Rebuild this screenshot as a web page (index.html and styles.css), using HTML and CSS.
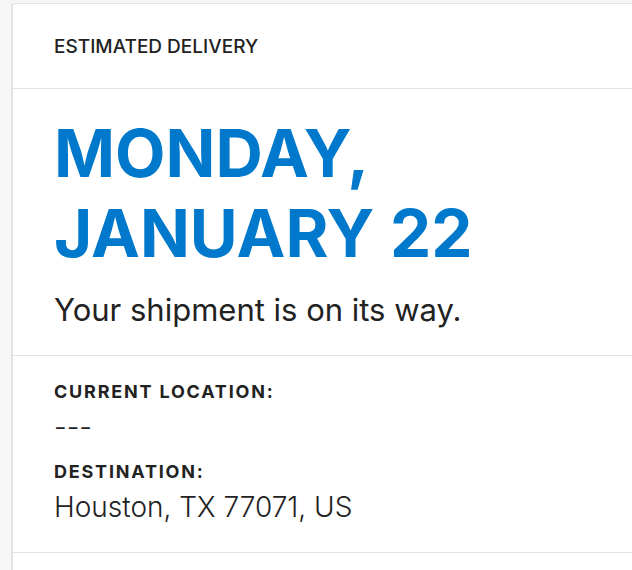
FILE: index.html
```html
<!DOCTYPE html>
<html lang="en">
<head>
<meta charset="utf-8">
<link rel="stylesheet" href="styles.css">
</head>
<body>
<div class="card">
  <div class="card-header">ESTIMATED DELIVERY</div>
  <div class="section hero">
    <h1 class="date">MONDAY,<br>JANUARY 22</h1>
    <p class="status">Your shipment is on its way.</p>
  </div>
  <div class="section details">
    <div class="label">CURRENT LOCATION:</div>
    <div class="value dash">---</div>
    <div class="label">DESTINATION:</div>
    <div class="value">Houston, TX 77071, US</div>
  </div>
  <div class="section footer"></div>
</div>
</body>
</html>
```

FILE: styles.css
```css
html, body {
  margin: 0;
  padding: 0;
  height: 100%;
  overflow: hidden;
}
body {
  background: #f6f6f7;
  font-family: Inter, "Noto Sans", sans-serif;
  color: #222;
  padding: 3px 0 0 11px;
  box-sizing: border-box;
}
.card {
  width: 720px;
  background: #fff;
  border: 1px solid #dfe2e6;
  border-left-width: 2px;
  border-radius: 4px 0 0 0;
}
.card-header {
  height: 84px;
  display: flex;
  align-items: center;
  padding-left: 41px;
  font-size: 19px;
  font-weight: 500;
  border-bottom: 1px solid #dfe2e6;
}
.section {
  padding-left: 41px;
  border-bottom: 1px solid #dfe2e6;
}
.hero {
  padding-top: 25px;
  padding-bottom: 27px;
}
.date {
  margin: 0;
  font-size: 65.5px;
  line-height: 80px;
  font-weight: 700;
  color: #0079cc;
}
.status {
  margin: 18px 0 0;
  font-size: 31px;
  line-height: 36px;
  font-weight: 400;
}
.details {
  padding-top: 24px;
  padding-bottom: 27px;
}
.label {
  font-size: 18px;
  font-weight: 700;
  letter-spacing: 1.8px;
  line-height: 24px;
  margin-bottom: 5px;
}
.value {
  font-size: 28px;
  font-weight: 300;
  line-height: 36px;
}
.dash {
  margin-bottom: 15px;
}
.footer {
  height: 40px;
  border-bottom: none;
}
```
